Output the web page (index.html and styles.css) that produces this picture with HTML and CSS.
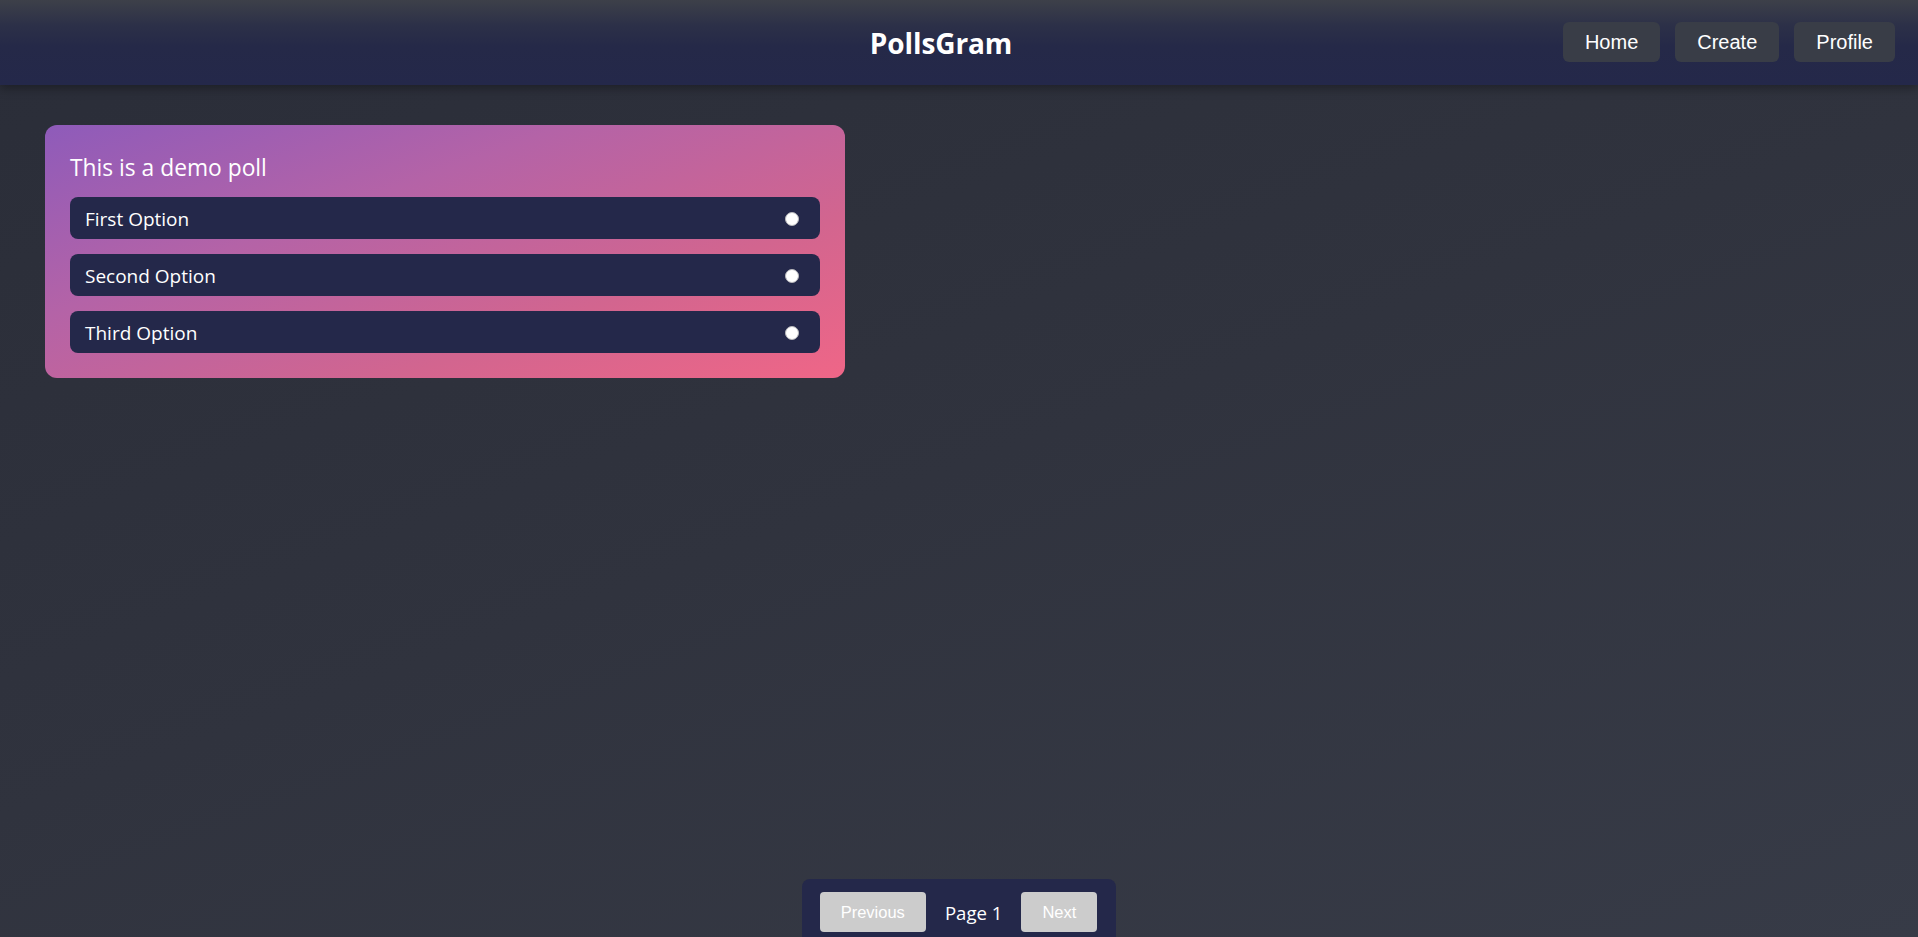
FILE: index.html
```html
<!DOCTYPE html>
<html lang="en">
<head>
<meta charset="utf-8">
<title>PollsGram</title>
<link rel="stylesheet" href="styles.css">
</head>
<body>
<div class="app">
  <header class="topbar">
    <div class="spacer"></div>
    <h1 class="brand">PollsGram</h1>
    <nav class="nav">
      <button class="nav-btn">Home</button>
      <button class="nav-btn">Create</button>
      <button class="nav-btn">Profile</button>
    </nav>
  </header>
  <main class="content">
    <section class="poll-card">
      <h3 class="poll-title">This is a demo poll</h3>
      <div class="options">
        <label class="option"><span class="option-text">First Option</span><input type="radio" name="p1" class="radio"></label>
        <label class="option"><span class="option-text">Second Option</span><input type="radio" name="p1" class="radio"></label>
        <label class="option"><span class="option-text">Third Option</span><input type="radio" name="p1" class="radio"></label>
      </div>
    </section>
  </main>
  <div class="pager-wrap">
    <div class="pager">
      <button class="pager-btn">Previous</button>
      <span class="pager-label">Page 1</span>
      <button class="pager-btn">Next</button>
    </div>
  </div>
</div>
</body>
</html>
```

FILE: styles.css
```css
* { box-sizing: border-box; }
html, body {
  margin: 0;
  height: 100%;
}
body {
  font-family: "Open Sans", "Noto Sans", sans-serif;
  color: #fff;
  background: linear-gradient(160deg, #2a2d38 0%, #30333e 50%, #373b47 100%);
  overflow: hidden;
}
.app {
  height: 100vh;
  display: flex;
  flex-direction: column;
}
.topbar {
  flex: 0 0 85px;
  display: flex;
  align-items: center;
  padding: 0 23px 2px;
  background: linear-gradient(to bottom, #3d4049 0%, #2c3048 30%, #252948 55%, #24284a 100%);
  box-shadow: 0 3px 10px rgba(0, 0, 0, 0.35);
  position: relative;
  z-index: 1;
}
.spacer { flex: 1 1 0; }
.brand {
  margin: 3px 36px 0 0;
  font-size: 28px;
  font-weight: 700;
  line-height: 1;
  letter-spacing: -0.1px;
}
.nav {
  flex: 1 1 0;
  display: flex;
  justify-content: flex-end;
  gap: 15px;
}
.nav-btn {
  font-family: "Liberation Sans", Arial, sans-serif;
  font-size: 20px;
  line-height: 24px;
  color: #fff;
  background: #393d47;
  border: none;
  border-radius: 6px;
  padding: 8px 22px;
}
.content {
  flex: 1 1 auto;
  padding: 40px 45px;
}
.poll-card {
  width: 800px;
  padding: 25px;
  border-radius: 12px;
  background: linear-gradient(160deg, #8e5bba 0%, #b463a7 35%, #d2658f 70%, #ef6687 100%);
}
.poll-title {
  margin: 0 0 13px;
  padding-top: 2px;
  font-size: 22.8px;
  font-weight: 400;
  line-height: 32px;
}
.options {
  display: flex;
  flex-direction: column;
  gap: 15px;
}
.option {
  display: flex;
  align-items: center;
  justify-content: space-between;
  padding: 11px 21px 9px 15px;
  background: #24284a;
  border-radius: 8px;
  font-size: 19px;
  line-height: 22px;
}
.radio {
  appearance: none;
  -webkit-appearance: none;
  margin: 0 0 1px;
  width: 14px;
  height: 14px;
  border-radius: 50%;
  background: #fff;
  border: 1px solid #b8b8bc;
}
.pager-wrap {
  display: flex;
  justify-content: center;
  margin-bottom: -8px;
}
.pager {
  display: flex;
  align-items: center;
  gap: 19px;
  padding: 13px 19px 13px 18px;
  background: #24284a;
  border-radius: 8px;
}
.pager-btn {
  font-family: "Liberation Sans", Arial, sans-serif;
  font-size: 16.5px;
  line-height: 40px;
  height: 40px;
  padding: 0 21px;
  color: #fff;
  background: #cccccc;
  border: none;
  border-radius: 4px;
}
.pager-label {
  font-size: 18.6px;
  line-height: 22px;
  padding-top: 2px;
}
```
